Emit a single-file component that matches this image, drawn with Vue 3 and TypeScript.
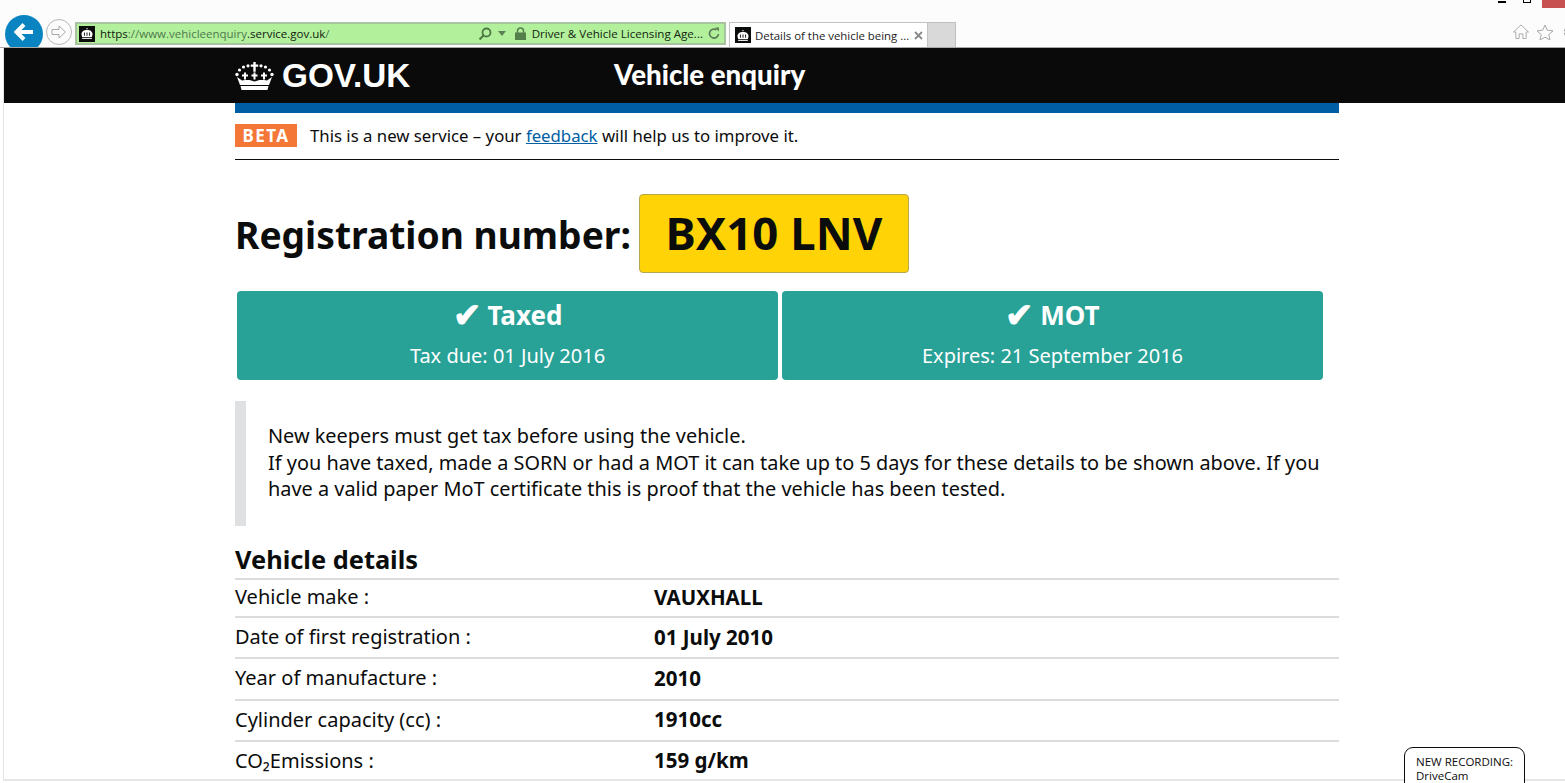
<script setup lang="ts">
const rows: { label: string; value: string }[] = [
  { label: 'Vehicle make :', value: 'VAUXHALL' },
  { label: 'Date of first registration :', value: '01 July 2010' },
  { label: 'Year of manufacture :', value: '2010' },
  { label: 'Cylinder capacity (cc) :', value: '1910cc' },
  { label: 'CO₂Emissions :', value: '159 g/km' },
]
const cards = [
  { title: 'Taxed', sub: 'Tax due: 01 July 2016' },
  { title: 'MOT', sub: 'Expires: 21 September 2016' },
]
</script>

<template>
  <div class="screen">
    <div class="chrome">
      <div class="back">
        <svg width="24" height="24" viewBox="0 0 24 24"><path d="M21 12H5M12 4.5 4.5 12l7.5 7.5" fill="none" stroke="#fff" stroke-width="4"/></svg>
      </div>
      <div class="fwd">
        <svg width="18" height="18" viewBox="0 0 18 18"><path d="M2 6.500h7V3l6.500 6-6.500 6v-3.500H2z" fill="none" stroke="#a9a9a9" stroke-width="1"/></svg>
      </div>
      <div class="address">
        <span class="favicon">
          <svg width="14" height="11" viewBox="0 0 39 30"><path d="M18 0h3v3h-3zM4 17C4 9 11 5 19.500 5S35 9 35 17l-2 8H6z" fill="#fff"/><path d="M11 12h2.500v9H11zM18.200 12h2.600v9h-2.600zM25.500 12H28v9h-2.500z" fill="#0b0c0c"/><path d="M6 27h27v3H6z" fill="#fff"/></svg>
        </span>
        <span class="url"><b>https</b>://www.vehicleenquiry<b>.service.gov.uk</b>/</span>
        <span class="addr-right">
          <svg width="14" height="14" viewBox="0 0 14 14"><circle cx="8.500" cy="5.500" r="4" fill="none" stroke="#4d7a45" stroke-width="1.800"/><path d="M5.500 8.500 1.500 12.500" stroke="#4d7a45" stroke-width="2.200"/></svg>
          <svg class="caret" width="8" height="5" viewBox="0 0 8 5"><path d="M0 0h8L4 5z" fill="#5e7f58"/></svg>
          <svg class="lock" width="11" height="13" viewBox="0 0 11 13"><path d="M2.500 6V4a3 3 0 0 1 6 0v2" fill="none" stroke="#55804c" stroke-width="1.500"/><rect y="5.500" width="11" height="7.500" fill="#55804c"/></svg>
          <span class="agency">Driver &amp; Vehicle Licensing Age...</span>
          <svg width="12" height="13" viewBox="0 0 12 13"><path d="M10.500 7a4.500 4.500 0 1 1-2-4.200" fill="none" stroke="#5b7c55" stroke-width="1.700"/><path d="M7 0.500h4v4z" fill="#5b7c55"/></svg>
        </span>
      </div>
      <div class="tab">
        <span class="favicon">
          <svg width="14" height="11" viewBox="0 0 39 30"><path d="M18 0h3v3h-3zM4 17C4 9 11 5 19.500 5S35 9 35 17l-2 8H6z" fill="#fff"/><path d="M11 12h2.500v9H11zM18.200 12h2.600v9h-2.600zM25.500 12H28v9h-2.500z" fill="#0b0c0c"/><path d="M6 27h27v3H6z" fill="#fff"/></svg>
        </span>
        <span class="tab-title">Details of the vehicle being ...</span>
        <svg class="tab-x" width="9" height="9" viewBox="0 0 9 9"><path d="M1 1l7 7M8 1 1 8" stroke="#8a8a8a" stroke-width="1.800"/></svg>
      </div>
      <div class="new-tab"></div>
      <div class="tools">
        <svg width="16" height="15" viewBox="0 0 17 16"><path d="M.5 8.500 8.500 1l8 7.500h-2.500v7H10.500v-5h-4v5H3v-7z" fill="none" stroke="#a8a8a8"/></svg>
        <svg width="18" height="16" viewBox="0 0 18 16"><path d="M9 1l2.300 5.200 5.700.6-4.200 3.700 1.200 5.500L9 13.200 4 16l1.200-5.500L1 6.800l5.700-.6z" fill="none" stroke="#a8a8a8"/></svg>
        <svg class="gear" width="16" height="16" viewBox="0 0 16 16"><circle cx="8" cy="8" r="5" fill="none" stroke="#a8a8a8" stroke-width="2.500" stroke-dasharray="2.500 1.500"/><circle cx="8" cy="8" r="2.500" fill="none" stroke="#a8a8a8"/></svg>
      </div>
      <div class="win">
        <span class="win-min"></span>
        <span class="win-max"></span>
        <span class="win-close"></span>
      </div>
    </div>

    <div class="viewport">
      <header class="topbar">
        <div class="brand">
          <svg class="crown" width="39" height="28" viewBox="0 0 39 28">
            <g fill="#fff">
              <path d="M18.300 0h2.400v2.400h2.500v2.400h-2.500v5h-2.400v-5h-2.500V2.400h2.500z"/>
              <circle cx="13" cy="3.800" r="1.600"/><circle cx="26" cy="3.800" r="1.600"/>
              <circle cx="8.500" cy="5" r="1.600"/><circle cx="30.500" cy="5" r="1.600"/>
              <circle cx="4.500" cy="8" r="1.600"/><circle cx="34.500" cy="8" r="1.600"/>
              <circle cx="2" cy="12.500" r="1.700"/><circle cx="37" cy="12.500" r="1.700"/>
              <path d="M9 10.500h2v2h2v2h-2v3h-2v-3H7v-2h2zM18.500 10.500h2v2h2v2h-2v3h-2v-3h-2v-2h2zM28 10.500h2v2h2v2h-2v3h-2v-3h-2v-2h2z"/>
              <path d="M2 15l5 3.500 3-.5 4.500 0 5 1.500 5-1.500 4.500 0 3 .5L37 15l-3 8H5z"/>
              <path d="M5.500 24h28l-1 4h-26z"/>
            </g>
          </svg>
          <span class="wordmark">GOV.UK</span>
        </div>
        <div class="service">Vehicle enquiry</div>
      </header>

      <main class="page">
        <div class="rule-blue"></div>
        <div class="phase">
          <span class="tag">BETA</span>
          <span class="phase-text">This is a new service – your <a href="#">feedback</a> will help us to improve it.</span>
        </div>

        <div class="reg">
          <h1>Registration number:</h1>
          <div class="plate">BX10 LNV</div>
        </div>

        <div class="cards">
          <div v-for="c in cards" :key="c.title" class="card">
            <div class="card-title"><span class="check">✔</span> {{ c.title }}</div>
            <div class="card-sub">{{ c.sub }}</div>
          </div>
        </div>

        <div class="notice">
          New keepers must get tax before using the vehicle.<br>
          If you have taxed, made a SORN or had a MOT it can take up to 5 days for these details to be shown above. If you have a valid paper MoT certificate this is proof that the vehicle has been tested.
        </div>

        <h2>Vehicle details</h2>
        <div class="details">
          <div v-for="r in rows" :key="r.label" class="row">
            <span class="k">{{ r.label }}</span>
            <span class="v">{{ r.value }}</span>
          </div>
        </div>
      </main>
    </div>

    <div class="recording">NEW RECORDING:<br>DriveCam</div>
  </div>
</template>

<style>
html, body { margin: 0; background: #fff; overflow: hidden; }
</style>

<style scoped>
.screen {
  position: relative;
  width: 1565px;
  height: 783px;
  overflow: hidden;
  font-family: "Noto Sans", "Open Sans", sans-serif;
  color: #0b0c0c;
  background: #fff;
}
.chrome {
  position: relative;
  height: 48px;
  background: #fcfcfc;
  display: flex;
  align-items: flex-start;
  box-sizing: border-box;
  padding: 15px 0 0 5px;
  border-bottom: 1px solid #a8a8a8;
}
.back {
  position: relative;
  z-index: 1;
  width: 38px;
  height: 38px;
  border-radius: 50%;
  background: #0a84c1;
  display: flex;
  align-items: center;
  justify-content: center;
  flex: none;
  clip-path: inset(0 0 6px 0);
  padding-bottom: 4px;
  box-sizing: border-box;
}
.fwd {
  width: 26px;
  height: 26px;
  margin: 4px 0 0 3px;
  border-radius: 50%;
  border: 1px solid #b8b8b8;
  box-sizing: border-box;
  display: flex;
  align-items: center;
  justify-content: center;
  flex: none;
}
.address {
  width: 651px;
  height: 23px;
  margin: 7px 0 0 3px;
  box-sizing: border-box;
  border: 2px solid #a9c2a0;
  background: #b2f09c;
  display: flex;
  align-items: center;
  padding-left: 2px;
  flex: none;
  font-family: "Open Sans", sans-serif;
  font-size: 11.500px;
}
.favicon {
  width: 16px;
  height: 16px;
  background: #0b0c0c;
  display: flex;
  align-items: center;
  justify-content: center;
  flex: none;
}
.url {
  margin-left: 5px;
  color: #4e7a4c;
  white-space: nowrap;
}
.url b { font-weight: 400; color: #10200e; }
.addr-right {
  margin-left: auto;
  display: flex;
  align-items: center;
  padding-right: 4px;
}
.caret { margin-left: 6px; }
.lock { margin-left: 9px; }
.agency {
  margin: 0 5px 0 6px;
  color: #13260f;
  white-space: nowrap;
  font-size: 11.600px;
  padding-bottom: 1px;
}
.tab {
  width: 199px;
  height: 25px;
  margin: 7px 0 0 3px;
  box-sizing: border-box;
  border: 1px solid #c4c4c4;
  border-bottom: none;
  background: #fff;
  display: flex;
  align-items: center;
  padding-left: 5px;
  font-family: "Open Sans", sans-serif;
  font-size: 11.400px;
  flex: none;
}
.tab-title { margin-left: 4px; white-space: nowrap; color: #1c1c1c; }
.tab-x { margin-left: 5px; }
.new-tab {
  width: 28px;
  height: 25px;
  margin-top: 7px;
  background: #d9d9d9;
  box-sizing: border-box;
  border: 1px solid #c0c0c0;
  border-left: none;
  border-bottom: none;
  flex: none;
}
.tools {
  position: absolute;
  left: 1513px;
  top: 24px;
  display: flex;
  gap: 7px;
}
.gear { margin-left: 1px; }
.win { position: absolute; top: 0; left: 0; }
.win-min {
  position: absolute;
  left: 1498px;
  top: 1px;
  width: 8px;
  height: 2px;
  background: #000;
}
.win-max {
  position: absolute;
  left: 1523px;
  top: -5px;
  width: 8px;
  height: 8px;
  border: 1px solid #000;
  box-sizing: border-box;
}
.win-close {
  position: absolute;
  left: 1542px;
  top: 0;
  width: 23px;
  height: 8px;
  background: #c75050;
}
.viewport {
  height: 731px;
  overflow: hidden;
  background: #fff;
  border-left: 1px solid #e4e4e4;
  margin-left: 3px;
  border-bottom: 2px solid #e6e6e6;
}
.topbar {
  height: 55px;
  background: #0a0a0a;
  color: #fff;
  display: flex;
  align-items: center;
  padding-left: 231px;
}
.brand {
  width: 379px;
  display: flex;
  align-items: center;
  gap: 8px;
  flex: none;
}
.wordmark {
  font-family: "Liberation Sans", Arial, sans-serif;
  font-weight: 700;
  font-size: 33.300px;
}
.service {
  font-family: "Lato", sans-serif;
  font-weight: 900;
  font-size: 27.700px;
  padding-bottom: 2px;
}
.page {
  width: 1104px;
  margin-left: 231px;
}
.rule-blue { height: 10px; background: #005ea5; }
.phase {
  height: 47px;
  box-sizing: border-box;
  border-bottom: 1px solid #0b0c0c;
  display: flex;
  align-items: center;
  padding-bottom: 1px;
}
.tag {
  width: 62px;
  height: 23px;
  background: #f47738;
  color: #fff;
  font-weight: 700;
  font-size: 17px;
  letter-spacing: 1.500px;
  display: flex;
  align-items: center;
  justify-content: center;
  flex: none;
}
.phase-text { margin-left: 13px; font-size: 16.750px; }
.phase-text a { color: #005ea5; }
.reg {
  display: flex;
  align-items: center;
  margin-top: 34px;
}
h1 {
  margin: 3px 0 0;
  font-size: 37.200px;
  font-weight: 700;
  line-height: 1;
}
.plate {
  margin-left: 8px;
  width: 270px;
  height: 79px;
  box-sizing: border-box;
  background: #ffd305;
  border: 1px solid #b5a84f;
  border-radius: 4px;
  display: flex;
  align-items: center;
  justify-content: center;
  font-size: 45.500px;
  font-weight: 700;
  padding-bottom: 4px;
}
.cards {
  display: grid;
  grid-template-columns: 541px 541px;
  gap: 4px;
  margin: 18px 0 0 2px;
}
.card {
  height: 89px;
  background: #28a197;
  border-radius: 4px;
  color: #fff;
  text-align: center;
  box-sizing: border-box;
  padding-top: 6px;
}
.card-title {
  font-size: 26px;
  font-weight: 700;
  line-height: 36px;
}
.check {
  font-size: 34px;
  line-height: 0;
  vertical-align: -2px;
}
.card-sub {
  font-size: 20px;
  line-height: 26px;
  margin-top: 10px;
}
.notice {
  margin-top: 21px;
  height: 125px;
  box-sizing: border-box;
  border-left: 11px solid #dee0e2;
  padding: 22px 10px 0 22px;
  font-size: 19.900px;
  line-height: 26.500px;
}
h2 {
  margin: 15px 0 0;
  padding-bottom: 1px;
  font-size: 25.400px;
  font-weight: 700;
  line-height: 36px;
}
.details { border-top: 2px solid #dcdcdc; }
.row {
  display: flex;
  align-items: center;
  height: 41.250px;
  box-sizing: border-box;
  border-bottom: 2px solid #dcdcdc;
  font-size: 20px;
  padding-bottom: 2px;
}
.row:first-child { height: 38px; padding-bottom: 3px; }
.k { width: 419px; flex: none; }
.v { font-weight: 700; font-size: 20.500px; }
.recording {
  position: absolute;
  left: 1404px;
  top: 747px;
  width: 121px;
  height: 40px;
  box-sizing: border-box;
  border: 1.500px solid #0b0c0c;
  border-radius: 9px 9px 0 0;
  background: #fff;
  padding: 7px 0 0 11px;
  font-family: "Open Sans", sans-serif;
  font-size: 11.500px;
  line-height: 14px;
  white-space: nowrap;
}
</style>
